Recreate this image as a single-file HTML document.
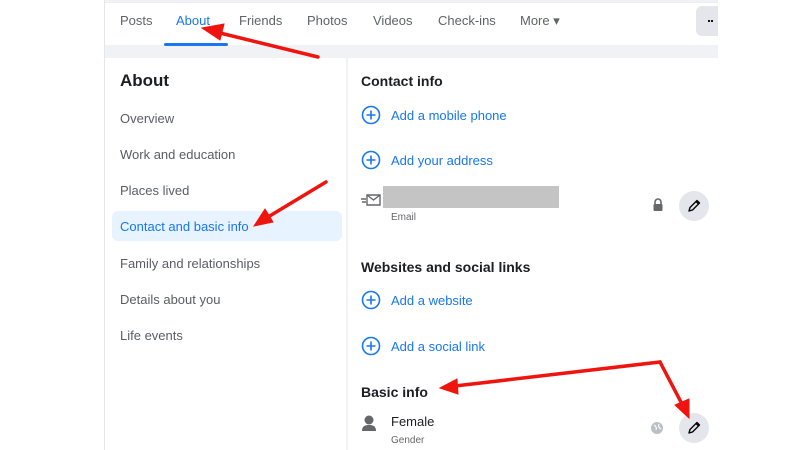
<!DOCTYPE html>
<html><head><meta charset="utf-8"><style>
*{margin:0;padding:0;box-sizing:border-box}
body{width:800px;height:450px;background:#fff;font-family:"Liberation Sans",sans-serif;position:relative;overflow:hidden}
.wrap{position:absolute;left:104px;top:0;width:614px;height:450px;background:#f0f2f5;border-left:1px solid #e4e6e9;overflow:hidden}
.nav{position:absolute;left:0;top:2px;width:614px;height:43px;background:#fff;border-top:1px solid #eee}
.nav span{position:absolute;top:10px;font-size:13px;color:#606368}
.ul{position:absolute;left:59px;top:40px;width:64px;height:3px;background:#1877f2;border-radius:2px}
.more{position:absolute;left:591px;top:3px;width:30px;height:30px;background:#e4e6eb;border-radius:6px}
.more b{position:absolute;left:12px;top:14px;width:2px;height:2px;background:#111;box-shadow:3px 0 #111}
.left{position:absolute;left:0;top:58px;width:241px;height:392px;background:#fff}
.right{position:absolute;left:243px;top:58px;width:371px;height:392px;background:#fff}
.t{position:absolute;font-size:13px;color:#5a5d62}
.h{position:absolute;font-size:14px;font-weight:bold;color:#1c1e21}
.lnk{position:absolute;font-size:13px;color:#1877f2}
.sel{position:absolute;left:7px;top:153px;width:230px;height:30px;background:#e7f3ff;border-radius:6px}
.pen{position:absolute;width:30px;height:30px;border-radius:50%;background:#e4e6eb}
.small{position:absolute;font-size:10px;color:#65676b}
</style></head><body>
<div class="wrap">
 <div class="nav">
  <span style="left:15px">Posts</span>
  <span style="left:71px;color:#1877f2">About</span>
  <span style="left:134px">Friends</span>
  <span style="left:202px">Photos</span>
  <span style="left:268px">Videos</span>
  <span style="left:333px">Check-ins</span>
  <span style="left:415px">More ▾</span>
  <div class="ul"></div>
  <div class="more"><b></b></div>
 </div>
 <div class="left">
  <div class="h" style="left:15px;top:13px;font-size:17px">About</div>
  <div class="t" style="left:15px;top:53px">Overview</div>
  <div class="t" style="left:15px;top:89px">Work and education</div>
  <div class="t" style="left:15px;top:125px">Places lived</div>
  <div class="sel"></div>
  <div class="t" style="left:15px;top:161px;color:#1877f2">Contact and basic info</div>
  <div class="t" style="left:15px;top:198px">Family and relationships</div>
  <div class="t" style="left:15px;top:234px">Details about you</div>
  <div class="t" style="left:15px;top:270px">Life events</div>
 </div>
 <div class="right">
  <div class="h" style="left:13px;top:15px">Contact info</div>
  <svg style="position:absolute;left:13px;top:47px" width="20" height="20"><circle cx="10" cy="10" r="8.5" fill="none" stroke="#1877f2" stroke-width="1.6"/><path d="M10 5.5v9M5.5 10h9" stroke="#1877f2" stroke-width="1.6"/></svg>
  <div class="lnk" style="left:43px;top:50px">Add a mobile phone</div>
  <svg style="position:absolute;left:13px;top:92px" width="20" height="20"><circle cx="10" cy="10" r="8.5" fill="none" stroke="#1877f2" stroke-width="1.6"/><path d="M10 5.5v9M5.5 10h9" stroke="#1877f2" stroke-width="1.6"/></svg>
  <div class="lnk" style="left:43px;top:95px">Add your address</div>
  <svg style="position:absolute;left:12px;top:135px" width="22" height="14"><path d="M7 2h13v10H7zM7 2l6.5 5 6.5-5" fill="none" stroke="#65676b" stroke-width="1.4"/><path d="M1 6h5M2 9h4" stroke="#65676b" stroke-width="1.4"/></svg>
  <div style="position:absolute;left:35px;top:128px;width:176px;height:22px;background:#c4c4c4"></div>
  <div class="small" style="left:43px;top:154px">Email</div>
  <svg style="position:absolute;left:304px;top:140px" width="12" height="14"><path d="M3 6V4a3 3 0 0 1 6 0v2" fill="none" stroke="#65676b" stroke-width="1.6"/><rect x="1.5" y="6" width="9" height="7" rx="1" fill="#65676b"/></svg>
  <div class="pen" style="left:331px;top:133px"></div>
  <svg style="position:absolute;left:338px;top:140px" width="16" height="16"><path d="M3 13l1-3.5 7-7 2.5 2.5-7 7z M10 3.5l2.5 2.5" fill="none" stroke="#050505" stroke-width="1.4" stroke-linejoin="round"/></svg>
  <div class="h" style="left:13px;top:201px">Websites and social links</div>
  <svg style="position:absolute;left:13px;top:232px" width="20" height="20"><circle cx="10" cy="10" r="8.5" fill="none" stroke="#1877f2" stroke-width="1.6"/><path d="M10 5.5v9M5.5 10h9" stroke="#1877f2" stroke-width="1.6"/></svg>
  <div class="lnk" style="left:43px;top:235px">Add a website</div>
  <svg style="position:absolute;left:13px;top:278px" width="20" height="20"><circle cx="10" cy="10" r="8.5" fill="none" stroke="#1877f2" stroke-width="1.6"/><path d="M10 5.5v9M5.5 10h9" stroke="#1877f2" stroke-width="1.6"/></svg>
  <div class="lnk" style="left:43px;top:281px">Add a social link</div>
  <div class="h" style="left:13px;top:326px">Basic info</div>
  <svg style="position:absolute;left:13px;top:356px" width="16" height="18"><circle cx="8" cy="6" r="4.5" fill="#65676b"/><path d="M1 17c0-5 3-6 7-6s7 1 7 6z" fill="#65676b"/></svg>
  <div class="t" style="left:43px;top:356px;color:#1c1e21">Female</div>
  <div class="small" style="left:43px;top:377px">Gender</div>
  <svg style="position:absolute;left:302px;top:363px" width="14" height="14"><circle cx="7" cy="7" r="6" fill="#bcc0c4"/><path d="M4 4c2 1 3 3 2 5M9 3c-1 2 0 4 2 5" stroke="#fff" stroke-width="1.2" fill="none"/></svg>
  <div class="pen" style="left:331px;top:355px"></div>
  <svg style="position:absolute;left:338px;top:362px" width="16" height="16"><path d="M3 13l1-3.5 7-7 2.5 2.5-7 7z M10 3.5l2.5 2.5" fill="none" stroke="#050505" stroke-width="1.4" stroke-linejoin="round"/></svg>
 </div>
</div>
<svg style="position:absolute;left:0;top:0" width="800" height="450">
 <g stroke="#f0140f" stroke-width="3.5" stroke-linecap="round" fill="#f0140f">
  <line x1="318" y1="57" x2="220" y2="33"/>
  <polygon points="202,28 224,24 220,40" stroke-width="1"/>
  <line x1="326" y1="182" x2="268" y2="217"/>
  <polygon points="254,226 265,209 273,222" stroke-width="1"/>
  <line x1="660" y1="362" x2="455" y2="386"/>
  <polygon points="440,388 457,379 458,394" stroke-width="1"/>
  <line x1="660" y1="362" x2="682" y2="404"/>
  <polygon points="689,418 675,405 689,399" stroke-width="1"/>
 </g>
</svg>
</body></html>
